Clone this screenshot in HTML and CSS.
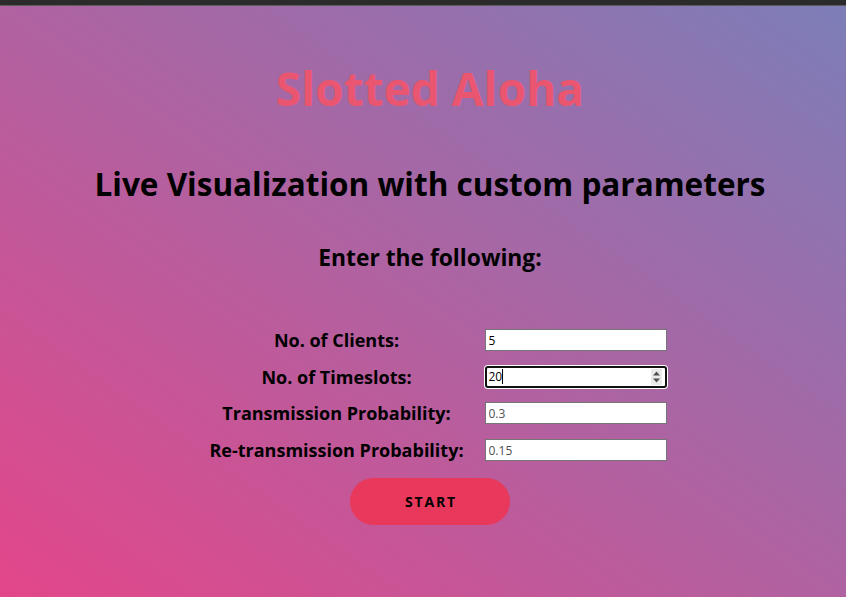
FILE: index.html
```html
<!DOCTYPE html>
<html>
<head>
<meta charset="utf-8">
<title>Slotted Aloha</title>
<link rel="stylesheet" href="styles.css">
</head>
<body>
<div class="topbar"></div>
<main class="page">
  <h1 class="title">Slotted Aloha</h1>
  <h2 class="subtitle">Live Visualization with custom parameters</h2>
  <h3 class="prompt">Enter the following:</h3>
  <form class="params">
    <label class="label" for="clients">No. of Clients:</label>
    <input class="field" id="clients" type="text" value="5">
    <label class="label">No. of Timeslots:</label>
    <div class="field field-focused">
      <span class="field-value">20</span><span class="caret"></span>
      <span class="spacer"></span>
      <svg class="spin" width="11" height="16" viewBox="0 0 11 16">
        <rect x="0" y="0" width="11" height="16" fill="#e9e9e9"/>
        <path d="M2 6.5 L5.5 2.5 L9 6.5 Z" fill="#505050"/>
        <path d="M2 9.5 L5.5 13.5 L9 9.5 Z" fill="#505050"/>
      </svg>
    </div>
    <label class="label" for="tp">Transmission Probability:</label>
    <input class="field" id="tp" type="text" placeholder="0.3">
    <label class="label" for="rtp">Re-transmission Probability:</label>
    <input class="field" id="rtp" type="text" placeholder="0.15">
  </form>
  <div class="actions">
    <button class="start" type="button">START</button>
  </div>
</main>
</body>
</html>
```
FILE: styles.css
```css
html, body {
  margin: 0;
  padding: 0;
  height: 100%;
}
body {
  font-family: "Open Sans", "Noto Sans", sans-serif;
  background: linear-gradient(to top right, #e3468a 0%, #7c7eb8 100%);
  color: #000;
  overflow: hidden;
}
.topbar {
  height: 5px;
  background: #2b2b2b;
  border-bottom: 1px solid #5c5c5c;
}
.page {
  display: flex;
  flex-direction: column;
  align-items: center;
  padding-left: 14px;
}
.title {
  margin: 52px 0 0;
  font-size: 46px;
  line-height: 60px;
  font-weight: 700;
  color: #ea5570;
}
.subtitle {
  margin: 46px 0 0;
  font-size: 31.5px;
  line-height: 40px;
  font-weight: 700;
}
.prompt {
  margin: 40px 0 0;
  font-size: 22.8px;
  line-height: 28px;
  font-weight: 700;
}
.params {
  margin: 57px 0 0 6px;
  display: grid;
  grid-template-columns: 274px 182px;
  column-gap: 11px;
  row-gap: 14.7px;
  align-items: center;
}
.label {
  text-align: center;
  font-size: 18px;
  font-weight: 700;
  line-height: 22px;
}
.field {
  box-sizing: border-box;
  width: 182px;
  height: 22px;
  margin: 0;
  padding: 0 3px;
  border: 1px solid #767676;
  background: #fff;
  font-family: "Open Sans", "Noto Sans", sans-serif;
  font-size: 12px;
  color: #000;
  border-radius: 0;
  outline: none;
}
.field::placeholder {
  color: #4f4f4f;
}
.field-focused {
  display: flex;
  align-items: center;
  border: 2px solid #111;
  border-radius: 3px;
  padding: 0 3px 0 2px;
  box-shadow: 0 0 0 1px #fff;
}
.field-value {
  line-height: 16px;
}
.caret {
  width: 1px;
  height: 15px;
  background: #000;
}
.spacer {
  flex: 1;
}
.spin {
  display: block;
}
.actions {
  margin-top: 17px;
}
.start {
  width: 160px;
  height: 47px;
  border: none;
  border-radius: 24px;
  background: #e8385b;
  font-family: "Open Sans", "Noto Sans", sans-serif;
  font-size: 14px;
  font-weight: 700;
  letter-spacing: 1.8px;
  color: #000;
  padding: 0 0 0 2px;
}
```
